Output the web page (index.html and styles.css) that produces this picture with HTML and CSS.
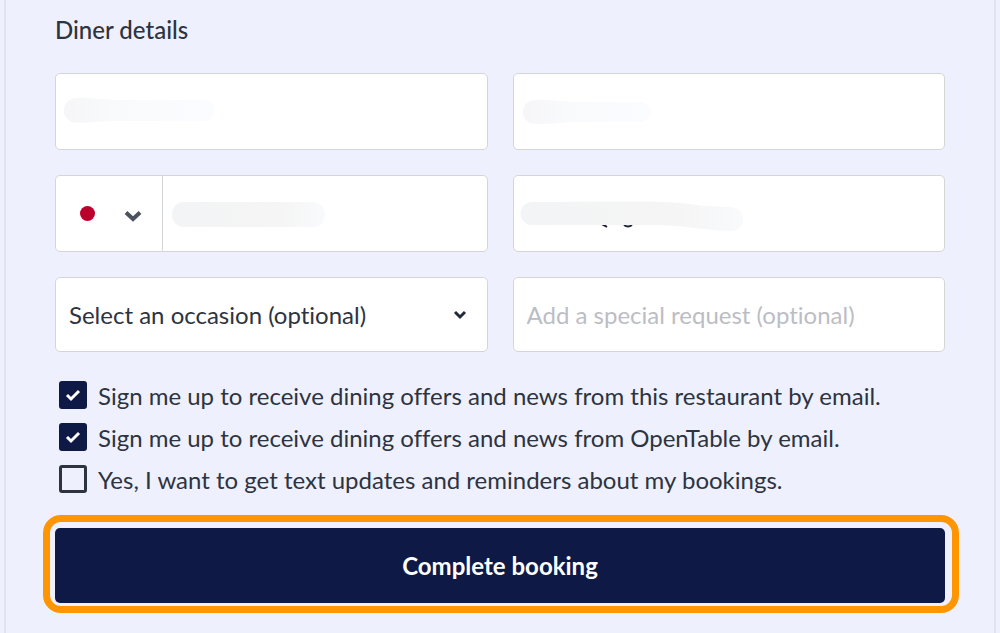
FILE: index.html
```
<!DOCTYPE html>
<html lang="en">
<head>
  <meta charset="UTF-8">
  <meta name="viewport" content="width=device-width, initial-scale=1.0">
  <title>Complete your booking</title>
  <link rel="stylesheet" href="styles.css">
</head>
<body>
  <form class="panel">
    <h2>Diner details</h2>

    <div class="fields">
      <div class="field">
        <input type="text" aria-label="First name">
        <svg class="smudge" width="230" height="75" viewBox="0 0 230 75" aria-hidden="true">
          <defs>
            <linearGradient id="fade" x1="0" x2="1" y1="0" y2="0">
              <stop offset="0" stop-color="#f6f6f8"/>
              <stop offset="0.35" stop-color="#f9fafc"/>
              <stop offset="1" stop-color="#fbfcff"/>
            </linearGradient>
          </defs>
          <path fill="url(#fade)" d="M20 24C35 23 45 26 60 26H148A10 10 0 0 1 148 47H60C45 47 35 49 20 48.500A12 12 0 0 1 20 24Z"/>
        </svg>
      </div>

      <div class="field">
        <input type="text" aria-label="Last name">
        <svg class="smudge" width="230" height="75" viewBox="0 0 230 75" aria-hidden="true">
          <path fill="url(#fade)" d="M21 26C38 25 45 28 57 28H127A10 10 0 0 1 127 48H57C45 49 38 50 21 50A12 12 0 0 1 21 26Z"/>
        </svg>
      </div>

      <div class="field phone">
        <div class="country">
          <select aria-label="Country code">
            <option aria-label="Japan"></option>
          </select>
          <span class="flag"></span>
          <svg class="chevron" width="18" height="12" viewBox="0 0 18 12" aria-hidden="true">
            <path d="M2 2.500L9 9L16 2.500" fill="none" stroke="#4d5260" stroke-width="4"/>
          </svg>
        </div>
        <div class="number">
          <input type="tel" aria-label="Phone number">
          <svg class="smudge" width="230" height="75" viewBox="0 0 230 75" aria-hidden="true">
            <defs>
              <linearGradient id="grey" x1="0" x2="1" y1="0" y2="0">
                <stop offset="0" stop-color="#f3f4f5"/>
                <stop offset="0.7" stop-color="#f5f5f5"/>
                <stop offset="1" stop-color="#f9fafc"/>
              </linearGradient>
            </defs>
            <rect x="9" y="26" width="153" height="25" rx="12" fill="url(#grey)"/>
          </svg>
        </div>
      </div>

      <div class="field">
        <input type="email" aria-label="Email">
        <svg class="smudge" width="240" height="75" viewBox="0 0 240 75" aria-hidden="true">
          <path d="M88 48Q90 49 93 51M110 49Q114 52 118 49" fill="none" stroke="#1c2233" stroke-width="2"/>
          <path fill="url(#grey)" d="M18 26C70 26 110 25 150 26C175 27 190 31 216 31A12 12 0 0 1 218 55C195 55 175 50 145 49H18A11 11 0 0 1 18 26Z"/>
        </svg>
      </div>

      <div class="field short">
        <select aria-label="Occasion">
          <option>Select an occasion (optional)</option>
        </select>
        <svg class="chevron" width="14" height="10" viewBox="0 0 14 10" aria-hidden="true">
          <path d="M2 2L7 7L12 2" fill="none" stroke="#242a3c" stroke-width="3"/>
        </svg>
      </div>

      <div class="field short">
        <input type="text" aria-label="Special request" placeholder="Add a special request (optional)">
      </div>
    </div>

    <div class="options">
      <label><input type="checkbox" checked>Sign me up to receive dining offers and news from this restaurant by email.</label>
      <label><input type="checkbox" checked>Sign me up to receive dining offers and news from OpenTable by email.</label>
      <label><input type="checkbox">Yes, I want to get text updates and reminders about my bookings.</label>
    </div>

    <div class="highlight">
      <button type="button">Complete booking</button>
    </div>
  </form>
</body>
</html>
```
FILE: styles.css
```
* {
  box-sizing: border-box;
}
body {
  margin: 0;
  background: #eef0fd;
  color: #2d333f;
  font-family: Lato, "Open Sans", sans-serif;
  font-size: 24px;
  font-variant-ligatures: none;
}
.panel {
  min-height: 100vh;
  margin: 0 4px;
  padding: 14px 49px 21px;
  border: 2px solid #e1e4ee;
  border-width: 0 2px;
}
h2 {
  margin: 0 0 27px;
  font-size: 24px;
  line-height: 32px;
  font-weight: 500;
}
.fields {
  display: grid;
  grid-template-columns: 1fr 1fr;
  gap: 25px;
}
.field {
  position: relative;
  display: flex;
  height: 77px;
  border: 1px solid #d4d5d7;
  border-radius: 5px;
  background: white;
  overflow: hidden;
}
.short {
  height: 75px;
}
.field input, .field select {
  width: 100%;
  height: 100%;
  padding: 0 13px;
  border: none;
  background: transparent;
  color: #2d333f;
  font: inherit;
  font-variant-ligatures: none;
  appearance: none;
}
.field input::placeholder {
  color: #bcbdc4;
}
.smudge {
  position: absolute;
  top: 0;
  left: 0;
  pointer-events: none;
}
.chevron {
  position: absolute;
  top: 32px;
  right: 20px;
  pointer-events: none;
}
.country {
  position: relative;
  width: 107px;
  border-right: 1px solid #d4d5d7;
}
.country .chevron {
  top: 34px;
}
.flag {
  position: absolute;
  top: 30px;
  left: 24px;
  width: 15px;
  height: 15px;
  border-radius: 50%;
  background: #bc002d;
  pointer-events: none;
}
.number {
  position: relative;
  flex: 1;
}
.options {
  margin: 22px 0 15px 4px;
}
.options label {
  display: flex;
  align-items: center;
  gap: 11px;
  height: 42px;
}
.options input {
  flex: none;
  width: 28px;
  height: 28px;
  margin: 0;
  border: 3px solid #2d333f;
  border-radius: 3px;
  appearance: none;
}
.options input:checked {
  border-color: #0e1a45;
  background: #0e1a45 url("data:image/svg+xml,%3Csvg xmlns='http://www.w3.org/2000/svg' viewBox='0 0 22 22'%3E%3Cpath d='M5 11l4 4 8-8' fill='none' stroke='white' stroke-width='3'/%3E%3C/svg%3E") center / 22px no-repeat;
}
/* ring is a little wider than the form column */
.highlight {
  margin: 0 -14px 0 -12px;
  padding: 6px 7px 3px 5px;
  border: 7px solid #ff9500;
  border-radius: 18px;
}
button {
  display: block;
  width: 100%;
  height: 75px;
  border: none;
  border-radius: 5px;
  background: #0e1a45;
  color: white;
  font: inherit;
  font-weight: 700;
  cursor: pointer;
}
```
